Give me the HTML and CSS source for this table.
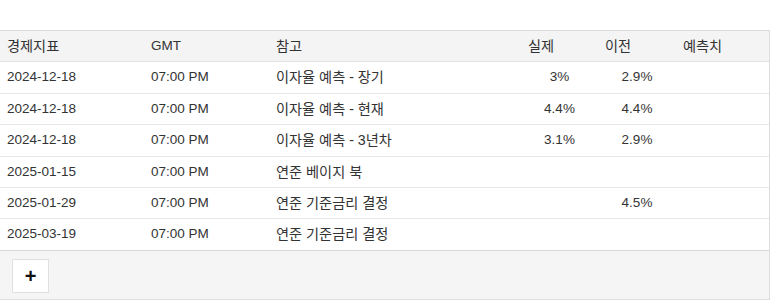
FILE: index.html
```html
<!DOCTYPE html>
<html lang="ko">
<head>
<meta charset="utf-8">
<link rel="stylesheet" href="styles.css">
</head>
<body>
<div class="page">
  <div class="panel">
    <table class="econ">
      <colgroup>
        <col class="c-date"><col class="c-time"><col class="c-note"><col class="c-act"><col class="c-prev"><col class="c-fc">
      </colgroup>
      <thead>
        <tr><th class="ko">경제지표</th><th>GMT</th><th class="ko">참고</th><th class="ko">실제</th><th class="ko">이전</th><th class="ko">예측치</th></tr>
      </thead>
      <tbody>
        <tr><td>2024-12-18</td><td>07:00 PM</td><td class="ko">이자율 예측 - 장기</td><td class="num">3%</td><td class="num">2.9%</td><td></td></tr>
        <tr><td>2024-12-18</td><td>07:00 PM</td><td class="ko">이자율 예측 - 현재</td><td class="num">4.4%</td><td class="num">4.4%</td><td></td></tr>
        <tr><td>2024-12-18</td><td>07:00 PM</td><td class="ko">이자율 예측 - 3년차</td><td class="num">3.1%</td><td class="num">2.9%</td><td></td></tr>
        <tr><td>2025-01-15</td><td>07:00 PM</td><td class="ko">연준 베이지 북</td><td class="num"></td><td class="num"></td><td></td></tr>
        <tr><td>2025-01-29</td><td>07:00 PM</td><td class="ko">연준 기준금리 결정</td><td class="num"></td><td class="num">4.5%</td><td></td></tr>
        <tr><td>2025-03-19</td><td>07:00 PM</td><td class="ko">연준 기준금리 결정</td><td class="num"></td><td class="num"></td><td></td></tr>
      </tbody>
    </table>
    <div class="footer">
      <button class="add" type="button">+</button>
    </div>
  </div>
</div>
</body>
</html>
```

FILE: styles.css
```css
html, body {
  margin: 0;
  padding: 0;
  background: #fff;
}
body {
  font-family: "Liberation Sans", Arial, "Noto Sans CJK KR", sans-serif;
  font-size: 13.5px;
  color: #333;
}
.page {
  padding-top: 30px;
}
.panel {
  width: 769px;
  border: 1px solid #dcdcdc;
  border-left: 0;
}
.econ {
  width: 100%;
  border-collapse: collapse;
  table-layout: fixed;
}
.c-date { width: 144px; }
.c-time { width: 125px; }
.c-note { width: 252px; }
.c-act { width: 77px; }
.c-prev { width: 78px; }
.c-fc { width: auto; }
.econ th,
.econ td {
  text-align: left;
  font-weight: normal;
  padding: 5px 7px;
  line-height: 20.4px;
  height: 20.4px;
  border-bottom: 1px solid #e6e6e6;
  white-space: nowrap;
}
.econ .ko {
  font-size: 14.2px;
}
.econ thead th {
  background: #f4f4f4;
  border-bottom: 1px solid #e2e2e2;
}
.econ td.num {
  text-align: center;
}
.econ tbody tr:last-child td {
  border-bottom: 1px solid #d8d8d8;
}
.footer {
  background: #f5f5f5;
  padding: 8px 12px 6px;
  height: 34px;
}
.add {
  width: 37px;
  height: 34px;
  background: #fff;
  border: 1px solid #e0e0e0;
  border-radius: 0;
  font-family: "Liberation Sans", Arial, sans-serif;
  font-size: 20px;
  font-weight: bold;
  color: #111;
  padding: 0;
  line-height: 30px;
}
```
